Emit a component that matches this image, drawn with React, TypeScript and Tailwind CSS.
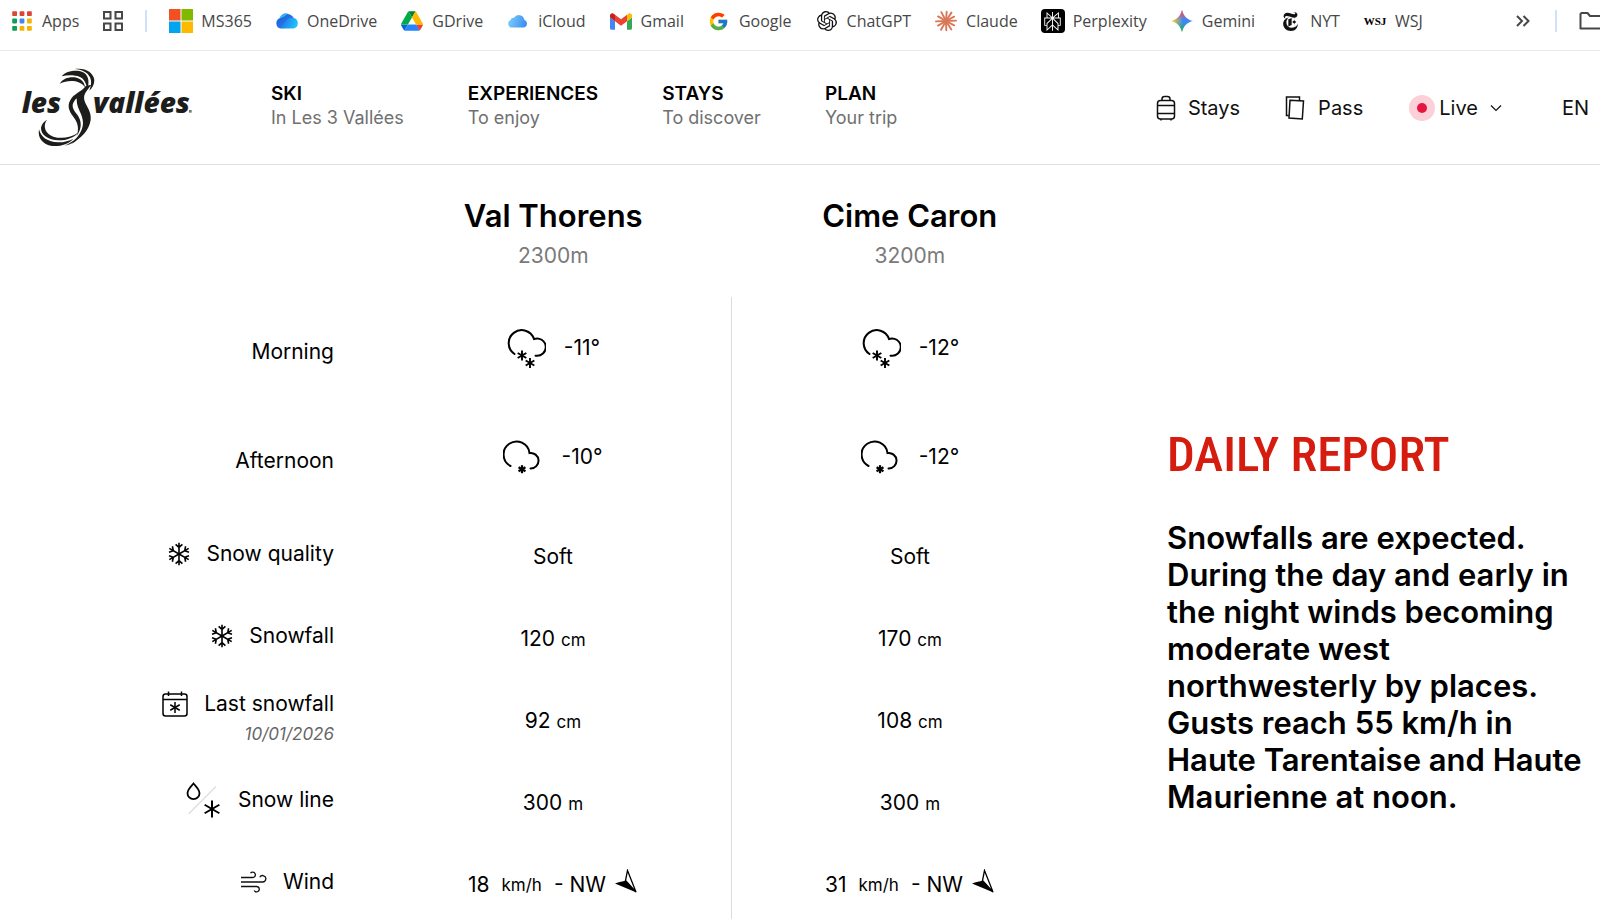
import React from 'react';
import { FcGoogle } from 'react-icons/fc';
import { SiNewyorktimes, SiOpenai, SiPerplexity } from 'react-icons/si';

const FlakeArms = ({ r }: { r: number }) => (
  <>
    {[0, 60, 120].map((angle) => (
      <line key={angle} x1="0" y1={-r} x2="0" y2={r} transform={`rotate(${angle})`} />
    ))}
  </>
);

const AppsIcon = () => {
  const colors = ['#db4437', '#db4437', '#db4437', '#0f9d58', '#4285f4', '#f4b400', '#0f9d58', '#f4b400', '#f4b400'];
  return (
    <svg width="20" height="20" viewBox="0 0 20 20">
      {colors.map((color, i) => (
        <rect key={i} x={(i % 3) * 7.4 + 0.2} y={Math.floor(i / 3) * 7.4 + 0.2} width="4.8" height="4.8" rx="0.8" fill={color} />
      ))}
    </svg>
  );
};

const TabGroupsIcon = () => (
  <svg width="20" height="20" viewBox="0 0 20 20" fill="none" stroke="#474747" strokeWidth="2">
    <rect x="1" y="1" width="6.5" height="6.5" />
    <rect x="12.5" y="1" width="6.5" height="6.5" />
    <rect x="1" y="12.5" width="6.5" height="6.5" />
    <rect x="12.5" y="12.5" width="6.5" height="6.5" />
  </svg>
);

const MicrosoftIcon = () => (
  <svg width="24" height="24" viewBox="0 0 24 24">
    <rect width="11.5" height="11.5" fill="#f25022" />
    <rect x="12.5" width="11.5" height="11.5" fill="#7fba00" />
    <rect y="12.5" width="11.5" height="11.5" fill="#00a4ef" />
    <rect x="12.5" y="12.5" width="11.5" height="11.5" fill="#ffb900" />
  </svg>
);

const OneDriveIcon = () => (
  <svg width="24" height="24" viewBox="0 0 24 24">
    <defs>
      <linearGradient id="od-back" x1="0" y1="0" x2="1" y2="1">
        <stop offset="0" stopColor="#1a56d6" />
        <stop offset="1" stopColor="#2f8cf0" />
      </linearGradient>
      <linearGradient id="od-front" x1="0" y1="0" x2="1" y2="0.3">
        <stop offset="0" stopColor="#1c6fe6" />
        <stop offset="1" stopColor="#22c0fa" />
      </linearGradient>
    </defs>
    <path d="M5.500 19.500A5.400 5.400 0 0 1 4.600 9.300 8 8 0 0 1 19 9.500L8 19.200z" fill="url(#od-back)" />
    <path d="M7 19.500C5.500 17 8.500 15 10.500 12.500 12.500 9.500 15 8.300 18.500 9.100a5.300 5.300 0 0 1 .1 10.400z" fill="url(#od-front)" />
    <path d="M2 11.500C5 8.500 8.500 9.500 12.800 4.600 9.500 3.300 5.500 5.500 4.600 9.300 3.500 9.600 2.600 10.400 2 11.500z" fill="#35b2f5" />
  </svg>
);

const DriveIcon = () => (
  <svg width="22" height="20" viewBox="0 0 87.3 78">
    <path d="m6.6 66.85 3.85 6.65c.8 1.400 1.950 2.500 3.300 3.300l13.750-23.800h-27.500c0 1.550.4 3.100 1.200 4.500z" fill="#0066da" />
    <path d="m43.650 25-13.750-23.800c-1.350.8-2.500 1.900-3.300 3.300l-25.400 44a9.060 9.060 0 0 0-1.200 4.500h27.500z" fill="#00ac47" />
    <path d="m73.550 76.800c1.350-.8 2.500-1.900 3.300-3.300l1.600-2.750 7.650-13.250c.8-1.400 1.200-2.950 1.200-4.500h-27.502l5.852 11.500z" fill="#ea4335" />
    <path d="m43.650 25 13.750-23.800c-1.350-.8-2.900-1.200-4.500-1.200h-18.500c-1.600 0-3.150.450-4.500 1.200z" fill="#00832d" />
    <path d="m59.800 53h-32.300l-13.750 23.800c1.350.8 2.900 1.200 4.500 1.200h50.800c1.600 0 3.150-.450 4.500-1.200z" fill="#2684fc" />
    <path d="m73.400 26.500-12.700-22c-.8-1.400-1.950-2.500-3.300-3.300l-13.750 23.800 16.150 28h27.450c0-1.550-.4-3.100-1.200-4.500z" fill="#ffba00" />
  </svg>
);

const ICloudIcon = () => (
  <svg width="20" height="14" viewBox="0 0 20 14">
    <defs>
      <linearGradient id="icloud" x1="0" y1="0.5" x2="1" y2="0.7">
        <stop offset="0" stopColor="#7ccbfb" />
        <stop offset="1" stopColor="#3a8bf0" />
      </linearGradient>
    </defs>
    <path d="M4.200 13.500A3.900 3.900 0 0 1 2.600 6 3 3 0 0 1 6 3.700 5.600 5.600 0 0 1 16.300 5.800 4 4 0 0 1 15.800 13.500z" fill="url(#icloud)" />
  </svg>
);

const GmailIcon = () => (
  <svg width="22" height="17" viewBox="52 42 88 66">
    <path fill="#4285f4" d="M58 108h14V74L52 59v43c0 3.320 2.690 6 6 6" />
    <path fill="#34a853" d="M120 108h14c3.320 0 6-2.690 6-6V59l-20 15" />
    <path fill="#fbbc04" d="M120 48v26l20-15v-8c0-7.420-8.470-11.650-14.400-7.200" />
    <path fill="#ea4335" d="M72 74V48l24 18 24-18v26L96 92" />
    <path fill="#c5221f" d="M52 51v8l20 15V48l-5.600-4.200c-5.940-4.450-14.400-.220-14.400 7.200" />
  </svg>
);

const ClaudeIcon = () => (
  <svg width="22" height="22" viewBox="-11 -11 22 22" stroke="#d97757" strokeWidth="1.900" strokeLinecap="round">
    {[4, 33, 62, 88, 118, 148, 178, 210, 240, 268, 300, 332].map((angle, i) => (
      <line key={angle} x1="0" y1="0" x2="0" y2={i % 2 ? -10 : -9.200} transform={`rotate(${angle})`} />
    ))}
  </svg>
);

const PerplexityIcon = () => (
  <span className="flex size-6 items-center justify-center rounded-sm bg-black">
    <SiPerplexity size={19} color="#fff" />
  </span>
);

const GeminiIcon = () => (
  <svg width="22" height="22" viewBox="0 0 24 24">
    <defs>
      <linearGradient id="gem-base" x1="0" y1="0" x2="1" y2="0">
        <stop offset="0.1" stopColor="#f6c21c" />
        <stop offset="0.4" stopColor="#6f9fc0" />
        <stop offset="0.55" stopColor="#3b86f8" />
      </linearGradient>
      <linearGradient id="gem-top" x1="0" y1="0" x2="0" y2="1">
        <stop offset="0.1" stopColor="#ee4d5d" />
        <stop offset="0.45" stopColor="#ee4d5d" stopOpacity="0" />
      </linearGradient>
      <linearGradient id="gem-bottom" x1="0" y1="1" x2="0" y2="0">
        <stop offset="0.1" stopColor="#1fae5b" />
        <stop offset="0.45" stopColor="#1fae5b" stopOpacity="0" />
      </linearGradient>
    </defs>
    {['url(#gem-base)', 'url(#gem-top)', 'url(#gem-bottom)'].map((fill) => (
      <path key={fill} fill={fill} d="M12 0c1.500 6.500 5.500 10.500 12 12-6.500 1.500-10.500 5.500-12 12-1.500-6.500-5.500-10.500-12-12 6.500-1.500 10.500-5.500 12-12z" />
    ))}
  </svg>
);

const WsjIcon = () => <span className="font-['Liberation_Serif',serif] text-[11px] leading-4 font-bold text-black">WSJ</span>;

const bookmarks = [
  { label: 'MS365', icon: <MicrosoftIcon /> },
  { label: 'OneDrive', icon: <OneDriveIcon /> },
  { label: 'GDrive', icon: <DriveIcon /> },
  { label: 'iCloud', icon: <ICloudIcon /> },
  { label: 'Gmail', icon: <GmailIcon /> },
  { label: 'Google', icon: <FcGoogle size={21} /> },
  { label: 'ChatGPT', icon: <SiOpenai size={20} color="#111" /> },
  { label: 'Claude', icon: <ClaudeIcon /> },
  { label: 'Perplexity', icon: <PerplexityIcon /> },
  { label: 'Gemini', icon: <GeminiIcon /> },
  { label: 'NYT', icon: <SiNewyorktimes size={19} color="#111" /> },
  { label: 'WSJ', icon: <WsjIcon /> },
];

const BookmarksBar = () => (
  <nav aria-label="Bookmarks" className="flex h-[51px] items-center overflow-hidden border-b border-[#e9e9e9] pb-2 pl-3 font-['Open_Sans',sans-serif] text-base text-[#474747]">
    <a href="#apps" className="flex shrink-0 items-center gap-[10px]">
      <AppsIcon />
      Apps
    </a>
    <button aria-label="Tab groups" className="ml-6 shrink-0">
      <TabGroupsIcon />
    </button>
    <span className="ml-[22px] h-[22px] w-[2px] shrink-0 bg-[#d3e0fb]" />
    <div className="ml-[22px] flex shrink-0 items-center gap-[23px]">
      {bookmarks.map(({ label, icon }) => (
        <a key={label} href={`#${label}`} className="flex items-center gap-2">
          <span className="flex w-6 justify-center">{icon}</span>
          {label}
        </a>
      ))}
    </div>
    <div className="-mr-1 ml-auto flex shrink-0 items-center">
      <button aria-label="More bookmarks">
        <svg width="14" height="14" viewBox="0 0 14 14" fill="none" stroke="#474747" strokeWidth="2">
          <path d="M1 2l5 5-5 5M7.500 2l5 5-5 5" />
        </svg>
      </button>
      <span className="ml-[25px] h-[22px] w-[2px] bg-[#d3e0fb]" />
      <button aria-label="All bookmarks" className="ml-[22px]">
        <svg width="25" height="18" viewBox="0 0 25 18" fill="none" stroke="#474747" strokeWidth="2">
          <path d="M2.500 1h6l2.500 3h12.500v12.500h-22v-14.500z" strokeLinejoin="round" />
        </svg>
      </button>
    </div>
  </nav>
);

const Logo = () => (
  <svg width="186" height="94" viewBox="0 0 558 282" fill="#1d1d1b" role="img" aria-label="les 3 vallées">
    <g fontFamily="'Open Sans', sans-serif" fontWeight="800" fontStyle="italic" fontSize="84">
      <text x="17" y="155">les</text>
      <text x="231" y="155">vallées</text>
    </g>
    <rect x="519" y="147" width="8" height="8" opacity=".6" />
    <path d="M137 46C148 32 170 28 190 30C212 34 222 52 216 77C214 81 211 77 211 73C206 55 196 46 178 44C162 42 150 43 137 46z" />
    <path d="M176 24C206 19 232 33 235 57C235 71 229 80 220 89C225 75 228 63 222 49C214 33 198 26 176 24z" />
    <path d="M131 68C142 51 162 46 182 50C198 55 206 65 207 79C200 69 192 64 178 61C160 59 146 61 131 68z" />
    <path d="M226 71C214 89 201 97 205 117C209 135 227 149 224 177C219 211 192 233 166 249C184 231 200 211 201 187C201 163 188 149 184 131C180 113 186 103 172 125C166 137 174 149 184 161C198 181 198 203 182 225C190 203 186 185 172 167C158 149 154 133 162 119C172 97 198 93 209 75z" />
    <path d="M93 176C80 193 86 217 112 227C138 235 166 229 186 215C176 229 152 238 128 238C96 237 74 221 75 200C77 189 84 181 93 176z" />
    <path d="M69 205C74 229 96 243 126 244C146 244 160 239 172 233C158 249 134 257 108 255C80 251 64 231 69 205z" />
    <path d="M146 254C166 245 182 233 194 219C186 237 168 251 146 254z" />
  </svg>
);

const menu = [
  { title: 'SKI', sub: 'In Les 3 Vallées' },
  { title: 'EXPERIENCES', sub: 'To enjoy' },
  { title: 'STAYS', sub: 'To discover' },
  { title: 'PLAN', sub: 'Your trip' },
];

const SuitcaseIcon = () => (
  <svg width="20" height="26" viewBox="0 0 20 26" fill="none" stroke="#111" strokeWidth="1.500">
    <rect x="1.500" y="5.500" width="17" height="18.500" rx="3" />
    <path d="M6 5.500V4a2.500 2.500 0 0 1 2.500-2.500h3A2.500 2.500 0 0 1 14 4v1.500M1.500 10.500h17M1.500 18.500h17M5 24v1.500M15 24v1.500" />
  </svg>
);

const PassIcon = () => (
  <svg width="20" height="26" viewBox="0 0 20 26" fill="none" stroke="#111" strokeWidth="1.500">
    <path d="M5 5.200l13.500.8-1.200 18-13.300-1z" />
    <path d="M3.800 20.500H1.500V2h13v3.500" />
  </svg>
);

const Header = () => (
  <header className="flex h-[114px] items-center border-b border-[#dfdfdf] pr-[11px] pl-4">
    <a href="#home" className="shrink-0">
      <Logo />
    </a>
    <nav aria-label="Main" className="ml-[69px] flex gap-16 pb-1">
      {menu.map(({ title, sub }) => (
        <a key={title} href={`#${title}`} className="block text-lg leading-6 whitespace-nowrap">
          <span className="block text-[19px] font-semibold text-black">{title}</span>
          <span className="block text-[#707070]">{sub}</span>
        </a>
      ))}
    </nav>
    <div className="ml-auto flex shrink-0 items-center text-xl leading-7 text-[#111]">
      <a href="#stays" className="flex items-center gap-3">
        <SuitcaseIcon />
        Stays
      </a>
      <a href="#pass" className="ml-[45px] flex items-center gap-[13px]">
        <PassIcon />
        Pass
      </a>
      <button className="ml-[46px] flex items-center">
        <span className="mr-1 flex size-[26px] items-center justify-center rounded-full bg-[#fbd0d9]">
          <span className="size-[10px] rounded-full bg-[#e5173f]" />
        </span>
        Live
        <svg className="ml-3" width="12" height="8" viewBox="0 0 12 8" fill="none" stroke="#111" strokeWidth="1.200">
          <path d="M1 1.500l5 5 5-5" />
        </svg>
      </button>
      <button className="ml-[60px]">EN</button>
    </div>
  </header>
);

// Cloud with two flakes under it
const HeavySnowIcon = () => (
  <svg width="40" height="40" viewBox="0 0 40 40" fill="none" stroke="#000" strokeWidth="2" strokeLinecap="round">
    <path d="M8.500 26A13 13 0 1 1 28 11A8.700 8.700 0 1 1 29.500 27.700" />
    <g strokeWidth="1.900" strokeLinecap="butt">
      <g transform="translate(16 27.500)"><FlakeArms r={5} /></g>
      <g transform="translate(24 35)"><FlakeArms r={5} /></g>
    </g>
  </svg>
);

const LightSnowIcon = () => (
  <svg width="40" height="40" viewBox="0 0 40 40" fill="none" stroke="#000" strokeWidth="2" strokeLinecap="round">
    <path d="M7.500 29A13 13 0 1 1 26.500 16A7.800 7.800 0 1 1 27.500 31.500" />
    <g transform="translate(19 32.200)" strokeWidth="2.200" strokeLinecap="butt"><FlakeArms r={4} /></g>
  </svg>
);

const SnowflakeIcon = () => (
  <svg width="22" height="24" viewBox="-11 -12 22 24" fill="none" stroke="#000" strokeWidth="1.600">
    {[0, 60, 120, 180, 240, 300].map((angle) => (
      <path key={angle} d="M0 0V-11.200M-3.400-9.600L0-6.600L3.400-9.600" transform={`rotate(${angle})`} />
    ))}
  </svg>
);

const CalendarIcon = () => (
  <svg width="26" height="26" viewBox="0 0 26 26" fill="none" stroke="#000" strokeWidth="1.500">
    <rect x="1" y="3" width="24" height="22" rx="2.500" />
    <path d="M1 8.500h24M6.500.5V5M19.500.5V5" />
    <g transform="translate(13 16.500)"><FlakeArms r={5.500} /></g>
  </svg>
);

const SnowLineIcon = () => (
  <svg width="36" height="36" viewBox="0 0 36 36" fill="none" stroke="#000" strokeWidth="2">
    <path d="M30 4.500L2.500 32" stroke="#ddd" strokeWidth="1.200" />
    <path d="M7.500 1.500C4.500 5 1.500 7.500 1.500 11.200A6 6 0 0 0 13.500 11.200C13.500 7.500 10.500 5 7.500 1.500z" strokeWidth="1.800" />
    <g transform="translate(26 27)"><FlakeArms r={8.500} /></g>
  </svg>
);

const WindIcon = () => (
  <svg width="26" height="22" viewBox="0 0 26 22" fill="none" stroke="#111" strokeWidth="1.300">
    <path d="M0 6.500h11.500a2.700 2.700 0 1 0-2-4.300M0 11h21.500a3.200 3.200 0 1 0-2.700-4.700M0 15.500h15.500a2.700 2.700 0 1 1-2.300 4" />
  </svg>
);

const WindArrow = () => (
  <svg width="24" height="32" viewBox="0 0 24 32">
    <path d="M1 14.500C5 13 9 12.500 11.500 11.500L22.500 23.500z" fill="#000" />
    <path d="M13.500 1.500L11.500 11.500L22 23z" fill="none" stroke="#000" strokeWidth="1.300" />
  </svg>
);

const stations = [
  { name: 'Val Thorens', altitude: '2300m' },
  { name: 'Cime Caron', altitude: '3200m' },
];

const Temperature = ({ icon, value }: { icon: React.ReactNode; value: string }) => (
  <span className="flex items-center justify-center gap-[18px]">
    {icon}
    {value}
  </span>
);

const Measure = ({ value, unit }: { value: number; unit: string }) => (
  <>
    {value} <span className="text-[17px]">{unit}</span>
  </>
);

const Wind = ({ speed }: { speed: number }) => (
  <span className="flex h-7 items-center justify-center">
    {speed}
    <span className="ml-3 text-[17px]">km/h</span>
    <span className="mr-2 ml-3">- NW</span>
    <WindArrow />
  </span>
);

const forecastRows = [
  { label: 'Morning', cells: [<Temperature icon={<HeavySnowIcon />} value="-11°" />, <Temperature icon={<HeavySnowIcon />} value="-12°" />] },
  { label: 'Afternoon', cells: [<Temperature icon={<LightSnowIcon />} value="-10°" />, <Temperature icon={<LightSnowIcon />} value="-12°" />] },
];

const snowRows = [
  { label: 'Snow quality', icon: <SnowflakeIcon />, cells: ['Soft', 'Soft'] },
  { label: 'Snowfall', icon: <SnowflakeIcon />, cells: [<Measure value={120} unit="cm" />, <Measure value={170} unit="cm" />] },
  { label: 'Last snowfall', icon: <CalendarIcon />, date: '10/01/2026', cells: [<Measure value={92} unit="cm" />, <Measure value={108} unit="cm" />] },
  { label: 'Snow line', icon: <SnowLineIcon />, cells: [<Measure value={300} unit="m" />, <Measure value={300} unit="m" />] },
  { label: 'Wind', icon: <WindIcon />, cells: [<Wind speed={18} />, <Wind speed={31} />] },
];

const WeatherTable = () => (
  <table className="w-[68%] shrink-0 table-fixed border-collapse text-[21px] leading-7 text-black">
    <thead>
      <tr>
        <td className="w-[375px]" />
        {stations.map(({ name, altitude }) => (
          <th key={name} scope="col" className="pt-[31px] pb-[27px] font-normal">
            <span className="block text-[31px] leading-10 font-semibold">{name}</span>
            <span className="mt-[6px] block text-[#7a7a7a]">{altitude}</span>
          </th>
        ))}
      </tr>
    </thead>
    <tbody>
      {forecastRows.map(({ label, cells }) => (
        <tr key={label} className="h-[109px] align-top">
          <th scope="row" className="pt-[41px] pr-[41px] text-right font-normal">{label}</th>
          {cells.map((cell, i) => (
            <td key={i} className="border-[#dcdcdc] pt-[31px] text-center first-of-type:border-r">{cell}</td>
          ))}
        </tr>
      ))}
      {snowRows.map(({ label, icon, date, cells }) => (
        <tr key={label} className="h-[82px] align-top last:h-[76px]">
          <th scope="row" className={`pr-[41px] font-normal ${date ? 'pt-[11px]' : 'pt-[25px]'}`}>
            <span className="flex h-7 items-center justify-end gap-4">
              {icon}
              {label}
            </span>
            {date && <span className="mt-[2px] block text-right text-[17px] text-[#666] italic">{date}</span>}
          </th>
          {cells.map((cell, i) => (
            <td key={i} className="border-[#dcdcdc] pt-7 text-center first-of-type:border-r">{cell}</td>
          ))}
        </tr>
      ))}
    </tbody>
  </table>
);

const DailyReport = () => (
  <section className="flex-1 pt-[262px] pr-2 pl-[79px]">
    <h2 className="font-['Roboto_Condensed',Roboto,sans-serif] text-[49px] leading-[56px] font-medium text-[#d51c0f]">DAILY REPORT</h2>
    <p className="mt-9 text-[31px] leading-[37px] font-semibold text-black">
      Snowfalls are expected. During the day and early in the night winds becoming moderate west northwesterly by places. Gusts reach 55 km/h in
      Haute Tarentaise and Haute Maurienne at noon.
    </p>
  </section>
);

export default function App() {
  return (
    <div className="min-h-screen bg-white font-['Inter',sans-serif]">
      <BookmarksBar />
      <Header />
      <main className="flex">
        <WeatherTable />
        <DailyReport />
      </main>
    </div>
  );
}
